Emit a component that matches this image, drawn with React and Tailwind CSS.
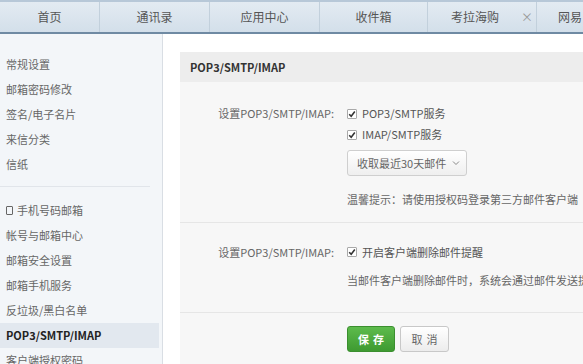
import React from "react";

const font = { fontFamily: '"Noto Sans CJK SC", "Noto Sans", sans-serif' };

function Check() {
  return (
    <span className="inline-flex w-[10px] h-[10px] border border-[#a9a9a9] bg-white rounded-[1px] items-center justify-center mr-[5px]">
      <svg width="8" height="8" viewBox="0 0 8 8">
        <path d="M1.2 4.2 L3.2 6.2 L6.8 1.6" stroke="#333" strokeWidth="1.6" fill="none" />
      </svg>
    </span>
  );
}

export default function App() {
  const tabs = [
    { t: "首页", w: "w-[100px]" },
    { t: "通讯录", w: "w-[110px]" },
    { t: "应用中心", w: "w-[110px]" },
    { t: "收件箱", w: "w-[108px]" },
    { t: "考拉海购", w: "w-[109px]", x: true },
    { t: "网易", w: "w-[60px]", last: true },
  ];
  const side1 = ["常规设置", "邮箱密码修改", "签名/电子名片", "来信分类", "信纸"];
  const side2 = ["帐号与邮箱中心", "邮箱安全设置", "邮箱手机服务", "反垃圾/黑白名单"];
  return (
    <div className="w-[583px] h-[364px] overflow-hidden bg-white flex flex-col" style={font}>
      <div className="h-[34px] shrink-0 flex bg-gradient-to-b from-[#e3ebf2] to-[#d3dfea] border-t-2 border-t-[#b7c8d8] border-b-2 border-b-[#6f8aa3]">
        {tabs.map((tab, i) => (
          <div
            key={i}
            className={`${tab.w} shrink-0 h-full flex items-center ${tab.x ? "justify-start pl-[23px]" : tab.last ? "justify-start pl-[21px]" : "justify-center"} border-r border-[#c2d0dc] text-[12px] text-[#555]`}
          >
            {tab.t}
            {tab.x && <span className="ml-[22px] text-[#999] text-[12px]">×</span>}
          </div>
        ))}
      </div>
      <div className="flex flex-1 min-h-0">
        <div className="w-[163px] shrink-0 bg-[#f3f6f9] border-r border-[#d9dee4] pt-[18px] text-[11px] text-[#666]">
          {side1.map((s) => (
            <div key={s} className="h-[25px] flex items-center pl-[6px]">{s}</div>
          ))}
          <div className="mt-[9px] mb-[11px] mr-[12px] h-px bg-[#e1e5ea]" />
          <div className="h-[25px] flex items-center pl-[6px]">
            <span className="inline-block w-[7px] h-[9px] border border-[#666] rounded-[1px] mr-[4px]" />
            手机号码邮箱
          </div>
          {side2.map((s) => (
            <div key={s} className="h-[25px] flex items-center pl-[6px]">{s}</div>
          ))}
          <div className="h-[25px] flex items-center pl-[6px] bg-[#e2e8ef] font-bold text-[#222] mr-[3px]">POP3/SMTP/IMAP</div>
          <div className="h-[25px] flex items-center pl-[6px]">客户端授权密码</div>
        </div>
        <div className="flex-1 min-w-0 pt-[18px] pl-[17px]">
          <div className="h-[30px] bg-[#ededed] flex items-center pl-[10px] text-[11px] font-bold text-[#333]">
            POP3/SMTP/IMAP
          </div>
          <div className="bg-[#f7f7f7] text-[11px] text-[#555] h-[300px]">
            <div className="flex pt-[21px] pb-[15px] border-b border-[#e6e6e6]">
              <div className="w-[167px] shrink-0 text-right pr-[13px] h-[21px] flex items-center justify-end text-[#666]">设置POP3/SMTP/IMAP:</div>
              <div className="flex-1 min-w-0">
                <div className="h-[21px] flex items-center"><Check />POP3/SMTP服务</div>
                <div className="h-[21px] flex items-center"><Check />IMAP/SMTP服务</div>
                <div className="mt-[5px] w-[120px] h-[26px] border border-[#cfcfcf] rounded-[3px] bg-gradient-to-b from-white to-[#efefef] flex items-center pl-[9px] text-[#666]">
                  收取最近30天邮件
                  <svg className="ml-[6px]" width="8" height="6" viewBox="0 0 8 6">
                    <path d="M1 1.5 L4 4.5 L7 1.5" stroke="#888" strokeWidth="1" fill="none" />
                  </svg>
                </div>
                <div className="mt-[15px] h-[16px] leading-[16px] whitespace-nowrap overflow-hidden text-[#666]">温馨提示：请使用授权码登录第三方邮件客户端</div>
              </div>
            </div>
            <div className="flex pt-[19px] pb-[24px] border-b border-[#e6e6e6]">
              <div className="w-[167px] shrink-0 text-right pr-[13px] h-[20px] flex items-center justify-end text-[#666]">设置POP3/SMTP/IMAP:</div>
              <div className="flex-1 min-w-0">
                <div className="h-[20px] flex items-center"><Check />开启客户端删除邮件提醒</div>
                <div className="mt-[10px] h-[16px] leading-[16px] whitespace-nowrap overflow-hidden text-[#666]">当邮件客户端删除邮件时，系统会通过邮件发送提醒</div>
              </div>
            </div>
            <div className="flex pt-[13px] pl-[167px] gap-[5px]">
              <div className="w-[48px] h-[26px] rounded-[3px] bg-gradient-to-b from-[#5dbb4c] to-[#3e9a31] border border-[#3b8f2f] text-white font-bold text-[11px] flex items-center justify-center tracking-[4px] pl-[4px]">保存</div>
              <div className="w-[49px] h-[26px] rounded-[3px] bg-gradient-to-b from-white to-[#ececec] border border-[#c8c8c8] text-[#666] text-[11px] flex items-center justify-center tracking-[4px] pl-[4px]">取消</div>
            </div>
          </div>
        </div>
      </div>
    </div>
  );
}
